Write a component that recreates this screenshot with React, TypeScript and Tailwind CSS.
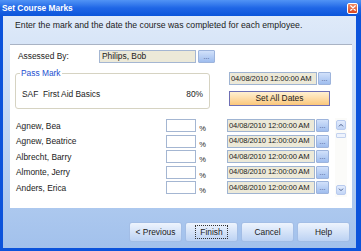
const employees = ["Agnew, Bea", "Agnew, Beatrice", "Albrecht, Barry", "Almonte, Jerry", "Anders, Erica"];

const DATE = "04/08/2010 12:00:00 AM";

function DotsButton({ className = "", empty }: { className?: string; empty?: boolean }) {
  return (
    <div
      className={`flex items-end justify-center rounded-[1px] border border-[#9db4dc] bg-gradient-to-b from-[#d2e1fa] to-[#9fbdee] pb-[2px] text-[7px] leading-[7px] text-[#3b4f7a] ${className}`}
    >
      {empty ? "" : "..."}
    </div>
  );
}

function DateField({ empty }: { empty?: boolean }) {
  return (
    <div className="flex h-[13px] shrink-0">
      <div className="flex w-[88px] items-center border border-[#9fb4d2] bg-[#ece9d8] pl-[1px] text-[7.6px] leading-none tracking-[-0.1px] whitespace-nowrap">
        {empty ? "" : DATE}
      </div>
      <DotsButton className="ml-[1px] w-[13px]" empty={empty} />
    </div>
  );
}

function TitleBar() {
  return (
    <div className="flex h-[16px] shrink-0 items-center justify-between bg-gradient-to-b from-[#5193f5] via-[#1f66e6] to-[#0b55da] pl-[2px] pr-[3px]">
      <span className="text-[8.4px] font-bold leading-none text-white">Set Course Marks</span>
      <div className="flex h-[11px] w-[11px] items-center justify-center rounded-[2px] border border-white bg-gradient-to-b from-[#f08a63] to-[#d9441f]">
        <svg viewBox="0 0 8 8" className="h-[6px] w-[6px]">
          <path d="M1 1L7 7M7 1L1 7" stroke="white" strokeWidth="1.6" strokeLinecap="round" />
        </svg>
      </div>
    </div>
  );
}

function Chevron({ up }: { up?: boolean }) {
  return (
    <div className="flex h-[10px] w-[10px] items-center justify-center rounded-[2px] border border-[#b9cbee] bg-gradient-to-b from-[#e3ecfd] to-[#c2d5f6]">
      <svg viewBox="0 0 8 6" className="h-[4px] w-[6px]">
        <path d={up ? "M1 5L4 2L7 5" : "M1 1L4 4L7 1"} stroke="#4b5f8c" strokeWidth="1.5" fill="none" />
      </svg>
    </div>
  );
}

function ScrollBar() {
  return (
    <div className="ml-[6px] flex h-[79px] w-[12px] flex-col items-center bg-[#fbfbf9] pt-[2px]">
      <Chevron up />
      <div className="mt-[3px] h-[5px] w-[10px] rounded-[1px] border border-[#c3d2ee] bg-[#eef3fd]" />
      <div className="flex-1" />
      <div className="mb-[2px]">
        <Chevron />
      </div>
    </div>
  );
}

function Button({ label, focused }: { label: string; focused?: boolean }) {
  return (
    <div className="flex h-[18px] w-[51px] items-center justify-center rounded-[2px] bg-gradient-to-b from-[#eef4fd] to-[#bcd2f3] shadow-[0_0_0_1px_rgba(160,185,225,0.6)]">
      <span
        className={`px-[4px] py-[1px] leading-[10px] ${focused ? "outline outline-1 outline-dotted outline-[#333]" : ""}`}
      >
        {label}
      </span>
    </div>
  );
}

export default function App() {
  return (
    <div className="flex h-[251px] w-[361px] flex-col overflow-hidden font-['Liberation_Sans',Arial,sans-serif] text-[8.4px] text-[#1b1b1b]">
      <TitleBar />
      <div className="flex flex-1 flex-col border-x-[3px] border-b-[3px] border-r-[5px] border-[#0c53db] bg-gradient-to-b from-[#dfeaf9] to-[#a2c1ec]">
        <p className="h-[28px] pl-[12px] pt-[4px] text-[8.7px] leading-[11px]">
          Enter the mark and the date the course was completed for each employee.
        </p>

        <div className="ml-[7px] flex h-[164px] w-[342px] flex-col border-t border-[#a9b3c4] bg-white pt-[5px]">
          {/* Assessed by */}
          <div className="flex h-[13px] items-center">
            <span className="w-[89px] pl-[8px]">Assessed By:</span>
            <div className="flex h-[13px] w-[97px] items-center border border-[#a4b6d2] bg-[#ece9d8] pl-[2px]">
              Philips, Bob
            </div>
            <DotsButton className="ml-[2px] h-[13px] w-[17px]" />
          </div>

          {/* Pass mark + date controls */}
          <div className="mt-[9px] flex h-[37px] items-start">
            <div className="relative ml-[5px] mt-[1px] flex h-[36px] w-[195px] items-center justify-between rounded-[3px] border border-[#d6d3c2] pl-[6px] pr-[6px] pt-[6px]">
              <span className="absolute -top-[6px] left-[4px] bg-white px-[1px] leading-[11px] text-[#1d4fd0]">
                Pass Mark
              </span>
              <span>SAF&nbsp; First Aid Basics</span>
              <span>80%</span>
            </div>
            <div className="ml-[19px] flex flex-col">
              <DateField />
              <div className="mt-[6px] flex h-[15px] w-[101px] items-center justify-center border border-[#6f6fb4] bg-gradient-to-b from-[#fff0d2] to-[#fbc77a]">
                Set All Dates
              </div>
            </div>
          </div>

          {/* Employee rows */}
          <div className="mt-[9px] flex h-[79px]">
            <div className="flex h-[79px] w-[319px] flex-col overflow-hidden">
              {employees.map((name) => (
                <div key={name} className="flex h-[15.5px] shrink-0 items-center">
                  <span className="w-[157px] pl-[6px] leading-none">{name}</span>
                  <div className="h-[13px] w-[30px] border border-[#a4b6d2] bg-white" />
                  <span className="ml-[3px] mt-[6px] w-[28px] text-[7.5px] leading-none">%</span>
                  <DateField />
                </div>
              ))}
              {/* next row, scrolled out of view */}
              <div className="flex h-[15.5px] shrink-0 items-center">
                <span className="w-[157px]" />
                <div className="h-[13px] w-[30px] border border-[#a4b6d2] bg-white" />
                <span className="ml-[3px] w-[28px]" />
                <DateField empty />
              </div>
            </div>
            <ScrollBar />
          </div>
        </div>

        <div className="flex justify-end gap-[5px] pr-[7px] pt-[15px]">
          <Button label="< Previous" />
          <Button label="Finish" focused />
          <Button label="Cancel" />
          <Button label="Help" />
        </div>
      </div>
    </div>
  );
}
